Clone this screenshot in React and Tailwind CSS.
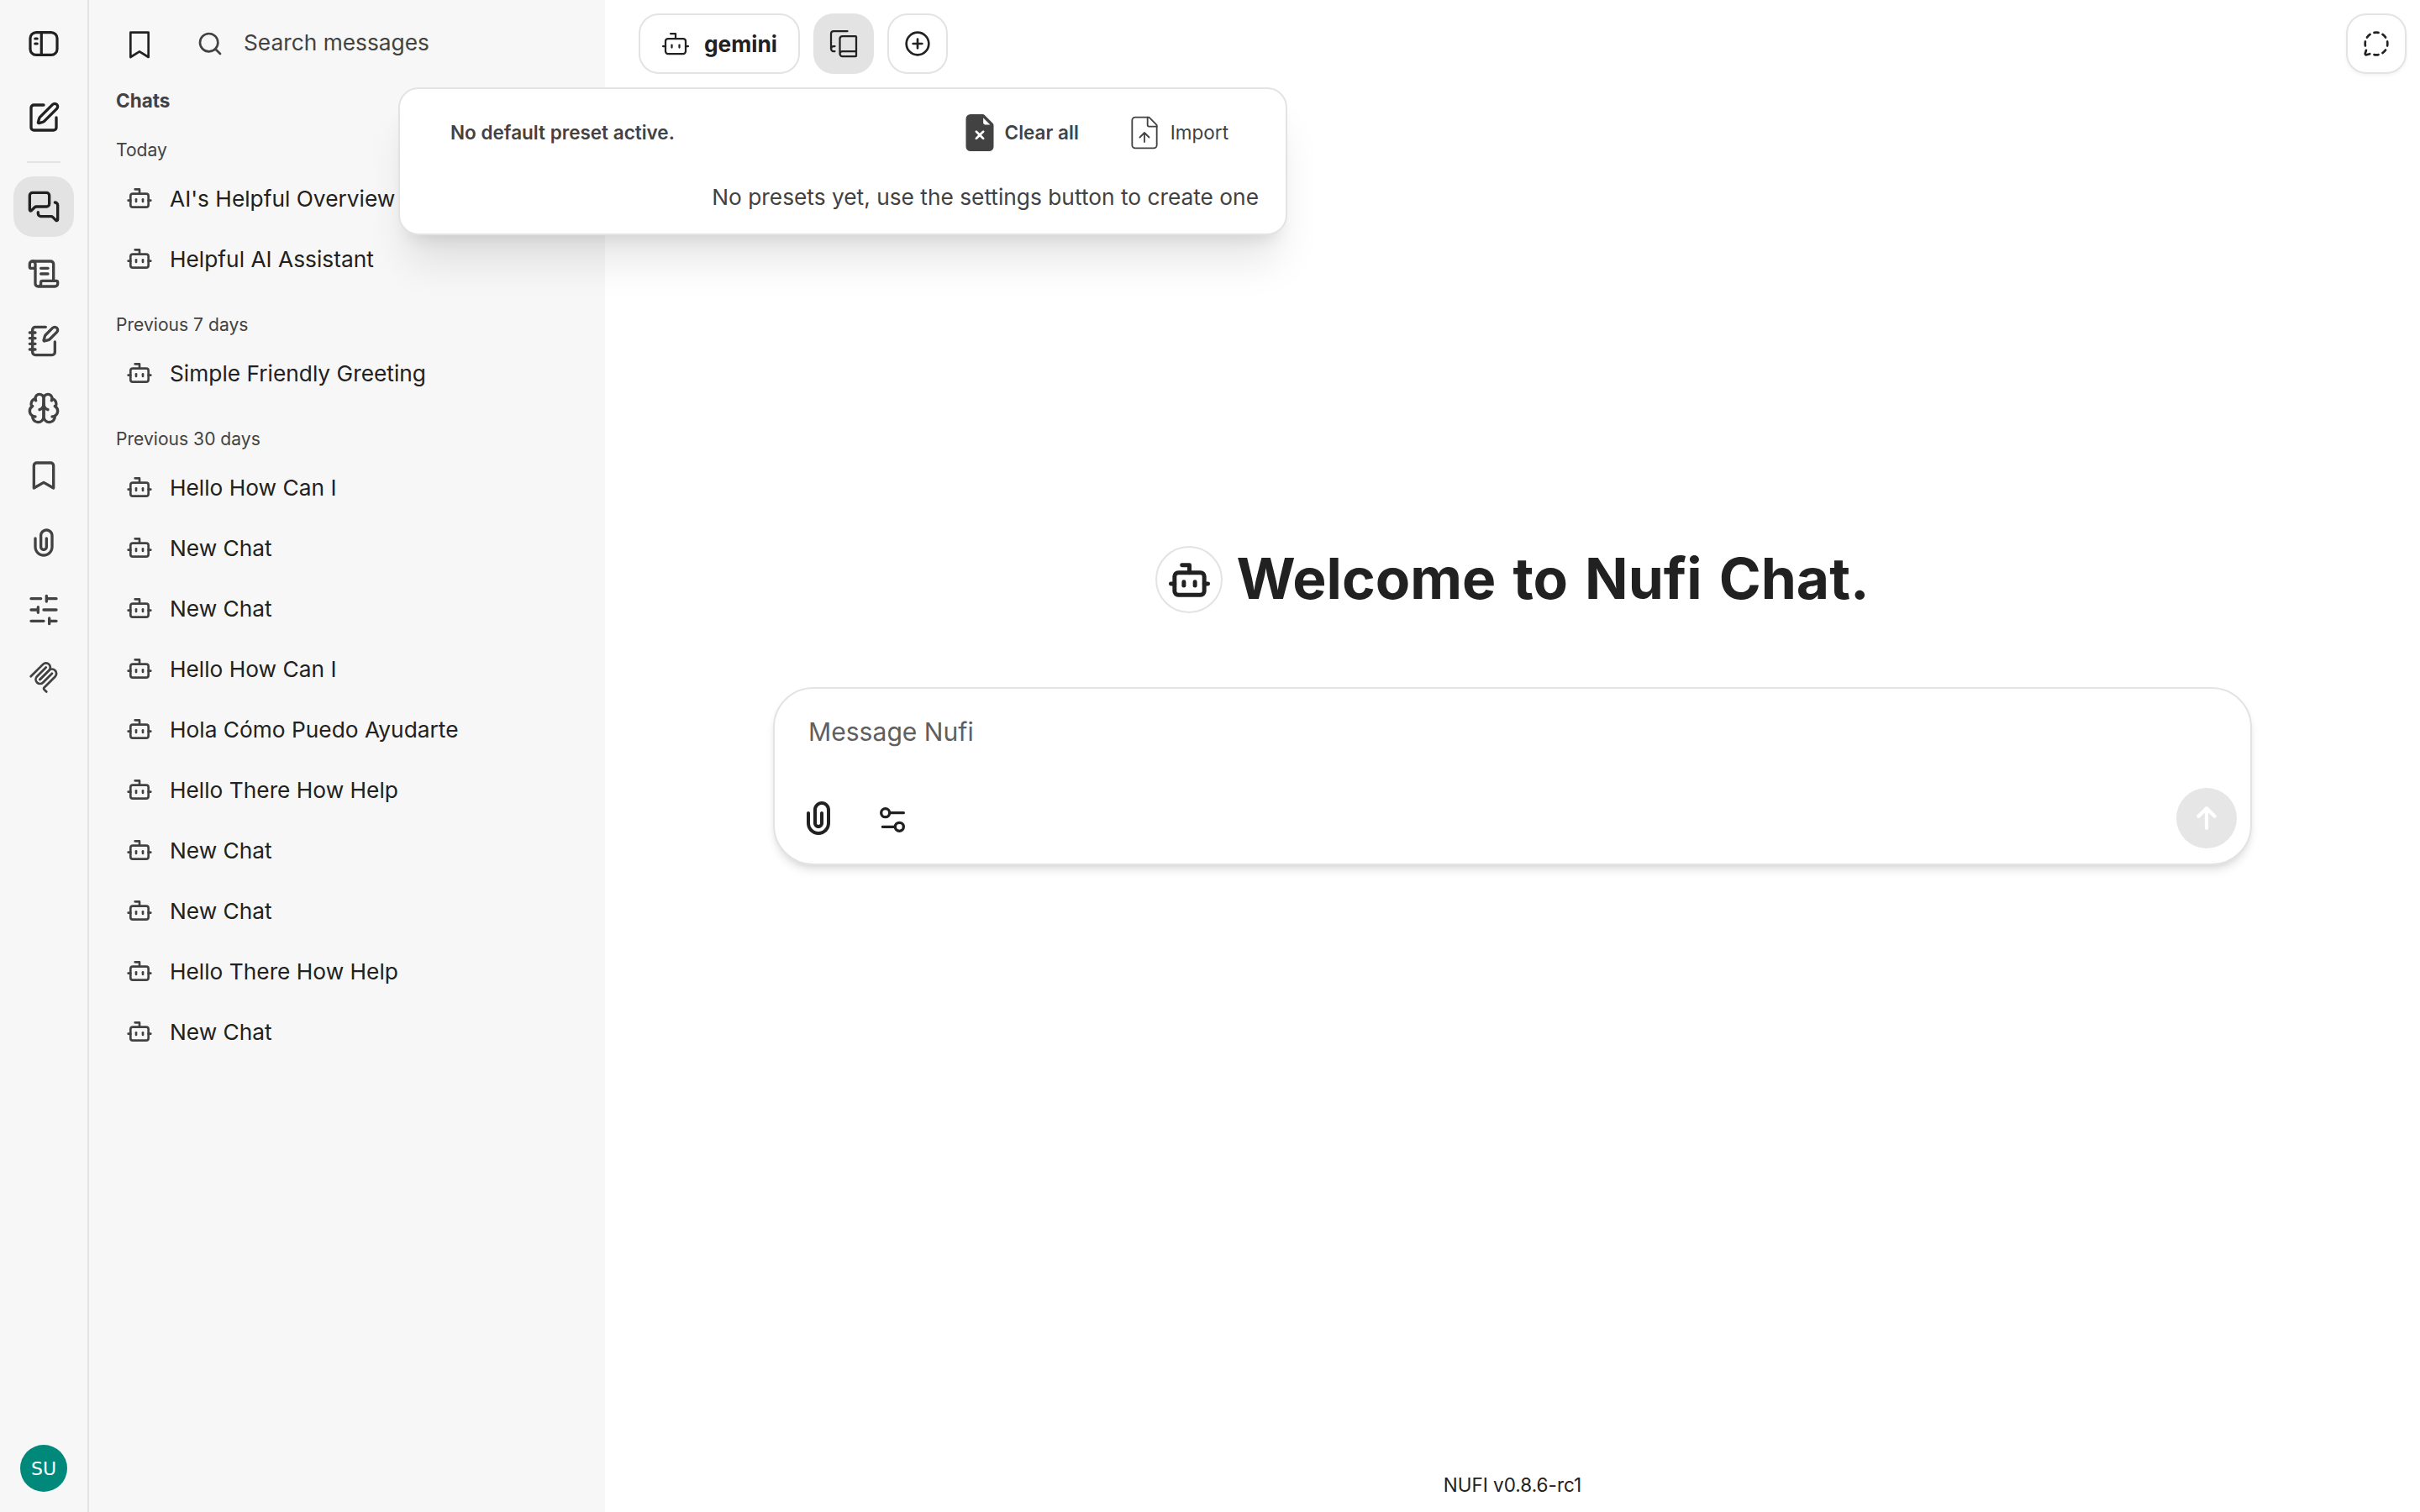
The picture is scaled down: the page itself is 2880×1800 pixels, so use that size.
import React from 'react';
import {
  SquarePen,
  MessagesSquare,
  ScrollText,
  Bookmark,
  Bot,
  Search,
  CirclePlus,
  MessageCircleDashed,
} from 'lucide-react';
import { BsFileEarmarkXFill } from 'react-icons/bs';

const railBtn = 'flex size-[72px] items-center justify-center rounded-3xl';

const groups = [
  { title: 'Today', chats: ["AI's Helpful Overview", 'Helpful AI Assistant'] },
  { title: 'Previous 7 days', chats: ['Simple Friendly Greeting'] },
  {
    title: 'Previous 30 days',
    chats: [
      'Hello How Can I',
      'New Chat',
      'New Chat',
      'Hello How Can I',
      'Hola Cómo Puedo Ayudarte',
      'Hello There How Help',
      'New Chat',
      'New Chat',
      'Hello There How Help',
      'New Chat',
    ],
  },
];

function SidebarIcon() {
  return (
    <svg width="40" height="40" viewBox="0 0 40 40" fill="none" stroke="currentColor" strokeWidth="3.2" strokeLinecap="round">
      <rect x="4" y="6.6" width="32" height="26.8" rx="7" />
      <path d="M17.3 7v26" />
      <path d="M9.8 14h2.4M9.8 20h2.4" />
    </svg>
  );
}

function BookmarkOutline() {
  return (
    <svg width="40" height="40" viewBox="0 0 15 15" fill="none" stroke="currentColor" strokeLinejoin="round">
      <path d="M3.5 2.5h8v11l-4-2.5-4 2.5z" />
    </svg>
  );
}

function NotebookPen() {
  return (
    <svg width="40" height="40" viewBox="0 0 24 24" fill="none" stroke="currentColor" strokeWidth="2" strokeLinecap="round" strokeLinejoin="round">
      <path d="M13.4 2H6a2 2 0 0 0-2 2v16a2 2 0 0 0 2 2h12a2 2 0 0 0 2-2v-7.4" />
      <path d="M2 6h4M2 10h4M2 14h4M2 18h4" />
      <path d="M21.378 5.626a1 1 0 1 0-3.004-3.004l-5.01 5.012a2 2 0 0 0-.506.854l-.837 2.87a.5.5 0 0 0 .62.62l2.87-.837a2 2 0 0 0 .854-.506z" />
    </svg>
  );
}

function BrainIcon() {
  return (
    <svg width="40" height="40" viewBox="0 0 24 24" fill="none" stroke="currentColor" strokeWidth="2" strokeLinecap="round" strokeLinejoin="round">
      <path d="M12 5a3 3 0 1 0-5.997.125 4 4 0 0 0-2.526 5.77 4 4 0 0 0 .556 6.588A4 4 0 1 0 12 18Z" />
      <path d="M12 5a3 3 0 1 1 5.997.125 4 4 0 0 1 2.526 5.77 4 4 0 0 1-.556 6.588A4 4 0 1 1 12 18Z" />
      <path d="M15 13a4.5 4.5 0 0 1-3-4 4.5 4.5 0 0 1-3 4" />
      <path d="M17.599 6.5a3 3 0 0 0 .399-1.375M6.003 5.125A3 3 0 0 0 6.401 6.5M3.477 10.896a4 4 0 0 1 .585-.396M19.938 10.5a4 4 0 0 1 .585.396M6 18a4 4 0 0 1-1.967-.516M19.967 17.484A4 4 0 0 1 18 18" />
    </svg>
  );
}

function AttachmentIcon({ size }) {
  return (
    <svg width={size} height={size} viewBox="0 0 24 24" fill="currentColor">
      <path
        fillRule="evenodd"
        clipRule="evenodd"
        d="M9 7C9 4.23858 11.2386 2 14 2C16.7614 2 19 4.23858 19 7V15C19 18.866 15.866 22 12 22C8.13401 22 5 18.866 5 15V9C5 8.44772 5.44772 8 6 8C6.55228 8 7 8.44772 7 9V15C7 17.7614 9.23858 20 12 20C14.7614 20 17 17.7614 17 15V7C17 5.34315 15.6569 4 14 4C12.3431 4 11 5.34315 11 7V15C11 15.5523 11.4477 16 12 16C12.5523 16 13 15.5523 13 15V9C13 8.44772 13.4477 8 14 8C14.5523 8 15 8.44772 15 9V15C15 16.6569 13.6569 18 12 18C10.3431 18 9 16.6569 9 15V7Z"
      />
    </svg>
  );
}

function SlidersIcon() {
  return (
    <svg width="40" height="40" viewBox="0 0 24 24" fill="none" stroke="currentColor" strokeWidth="2" strokeLinecap="round">
      <path d="M21 4h-7M10 4H3M21 12h-9M8 12H3M21 20h-5M12 20H3M14 2v4M8 10v4M16 18v4" />
    </svg>
  );
}

function McpIcon() {
  return (
    <svg width="40" height="40" viewBox="-4 -6 188 188" fill="none" stroke="currentColor" strokeWidth="13" strokeLinecap="round">
      <path d="M18 84.8528L85.8822 16.9706C95.2548 7.59798 110.451 7.59798 119.823 16.9706C129.196 26.3431 129.196 41.5391 119.823 50.9117L68.5581 102.177" />
      <path d="M69.2652 101.47L119.823 50.9117C129.196 41.5391 144.392 41.5391 153.765 50.9117L154.118 51.2652C163.491 60.6378 163.491 75.8338 154.118 85.2063L92.7248 146.6C89.6006 149.724 89.6006 154.789 92.7248 157.913L105.331 170.52" />
      <path d="M102.853 33.9411L52.6482 84.1457C43.2756 93.5183 43.2756 108.714 52.6482 118.087C62.0208 127.459 77.2167 127.459 86.5893 118.087L136.794 67.8822" />
    </svg>
  );
}

function PresetsIcon() {
  return (
    <svg width="36" height="36" viewBox="0 0 24 24" fill="none" stroke="currentColor" strokeWidth="1.5" strokeLinecap="round" strokeLinejoin="round">
      <path d="M2 16V4a2 2 0 0 1 2-2h11" />
      <path d="M22 18H11a2 2 0 1 0 0 4h10.5a.5.5 0 0 0 .5-.5v-15a.5.5 0 0 0-.5-.5H11a2 2 0 0 0-2 2v12" />
      <path d="M5 14H4a2 2 0 1 0 0 4h1" />
    </svg>
  );
}

function FileUpIcon() {
  return (
    <svg width="44" height="44" viewBox="0 0 24 24" fill="none" stroke="currentColor" strokeWidth="1" strokeLinecap="round" strokeLinejoin="round">
      <path d="M15 2H6a2 2 0 0 0-2 2v16a2 2 0 0 0 2 2h12a2 2 0 0 0 2-2V7Z" />
      <path d="M14 2v5a1 1 0 0 0 1 1h5" />
      <path d="M12 12v6M15 15l-3-3-3 3" />
    </svg>
  );
}

function ToolsIcon() {
  return (
    <svg width="40" height="40" viewBox="0 0 24 24" fill="none" stroke="currentColor" strokeWidth="2" strokeLinecap="round" strokeLinejoin="round">
      <path d="M20 7h-9M14 17H5" />
      <circle cx="17" cy="17" r="3" />
      <circle cx="7" cy="7" r="3" />
    </svg>
  );
}

function SendIcon() {
  return (
    <svg width="60" height="60" viewBox="0 0 32 32" fill="currentColor">
      <path d="M15.1918 8.90615C15.6381 8.45983 16.3618 8.45983 16.8081 8.90615L21.9509 14.049C22.3972 14.4953 22.3972 15.2189 21.9509 15.6652C21.5046 16.1116 20.781 16.1116 20.3347 15.6652L17.1428 12.4734V22.2857C17.1428 22.9169 16.6311 23.4286 15.9999 23.4286C15.3688 23.4286 14.8571 22.9169 14.8571 22.2857V12.4734L11.6652 15.6652C11.2189 16.1116 10.4953 16.1116 10.049 15.6652C9.60265 15.2189 9.60265 14.4953 10.049 14.049L15.1918 8.90615Z" />
    </svg>
  );
}

function Rail() {
  return (
    <aside className="flex w-[106px] shrink-0 flex-col items-center border-r-2 border-[#e3e3e3] pt-4 pb-6 text-[#424242]">
      <button className={`${railBtn} text-[#212121]`}><SidebarIcon /></button>
      <button className={`${railBtn} mt-4 text-[#212121]`}><SquarePen size={40} /></button>
      <div className="my-4 h-0.5 w-10 bg-[#e3e3e3]" />
      <nav className="flex flex-1 flex-col gap-2">
        <button className={`${railBtn} bg-[#e3e3e3] text-[#212121]`}><MessagesSquare size={40} /></button>
        <button className={railBtn}><ScrollText size={40} /></button>
        <button className={railBtn}><NotebookPen /></button>
        <button className={railBtn}><BrainIcon /></button>
        <button className={railBtn}><Bookmark size={40} /></button>
        <button className={railBtn}><AttachmentIcon size={40} /></button>
        <button className={railBtn}><SlidersIcon /></button>
        <button className={railBtn}><McpIcon /></button>
      </nav>
      <div className="flex size-14 items-center justify-center rounded-full bg-[#00897b] font-['DejaVu_Sans',sans-serif] text-[22px] text-white">
        SU
      </div>
    </aside>
  );
}

function ChatPanel() {
  return (
    <section className="flex w-[614px] shrink-0 flex-col pt-4 pl-8 text-[#424242]">
      <div className="flex h-[72px] items-center pl-2">
        <span className="text-[#212121]"><BookmarkOutline /></span>
        <Search size={32} className="ml-12" />
        <span className="ml-6 pb-0.5 text-[26.3px]">Search messages</span>
      </div>
      <h2 className="flex h-[66px] items-center pb-0.5 text-[22.5px] font-bold">Chats</h2>
      {groups.map((group) => (
        <div key={group.title} className="mb-[18px]">
          <h3 className="flex h-[46px] items-center pt-[3px] text-[21.1px]">{group.title}</h3>
          {group.chats.map((chat, i) => (
            <div key={i} className="flex h-[72px] items-center gap-5 pl-3">
              <Bot size={32} />
              <span className="pt-0.5 text-[26.3px] text-[#212121]">{chat}</span>
            </div>
          ))}
        </div>
      ))}
    </section>
  );
}

function PresetsMenu() {
  return (
    <div className="absolute top-[104px] left-[474px] h-44 w-[1058px] rounded-3xl border-2 border-[#e3e3e3] bg-white text-[#424242] shadow-[0_40px_50px_-10px_rgba(0,0,0,0.1),0_16px_20px_-12px_rgba(0,0,0,0.1)]">
      <div className="flex h-[104px] items-center pr-17 pl-15 text-[22.5px]">
        <span className="flex-1 font-semibold">No default preset active.</span>
        <button className="flex items-center gap-2 font-semibold">
          <BsFileEarmarkXFill size={44} />
          Clear all
        </button>
        <button className="ml-14 flex items-center gap-[9px]">
          <FileUpIcon />
          Import
        </button>
      </div>
      <p className="flex h-[50px] items-center justify-end pr-8 text-[26.3px]">No presets yet, use the settings button to create one</p>
    </div>
  );
}

function Header() {
  return (
    <header className="flex h-[104px] items-center gap-4 pr-4 pl-10">
      <button className="flex h-[72px] w-[192px] items-center gap-4 rounded-3xl border-2 border-[#e3e3e3] pl-6 text-[26.3px] font-bold">
        <Bot size={36} strokeWidth={1.5} />
        <span className="pt-0.5">gemini</span>
      </button>
      <button className="flex size-[72px] items-center justify-center rounded-3xl bg-[#e3e3e3]"><PresetsIcon /></button>
      <button className="flex size-[72px] items-center justify-center rounded-3xl border-2 border-[#e3e3e3]"><CirclePlus size={32} /></button>
      <button className="ml-auto flex size-[72px] items-center justify-center rounded-3xl border-2 border-[#e3e3e3] shadow-[0_2px_4px_rgba(0,0,0,0.05)]">
        <MessageCircleDashed size={32} />
      </button>
    </header>
  );
}

function Composer() {
  return (
    <div className="flex h-[212px] w-[1760px] flex-col justify-between rounded-[48px] border-2 border-[#e3e3e3] bg-white p-4 pb-[18px] shadow-[0_8px_12px_-2px_rgba(0,0,0,0.1),0_4px_8px_-4px_rgba(0,0,0,0.1)]">
      <div className="px-6 pt-[13px] text-[30.1px] leading-[44px] text-[#5f5f5f]">Message Nufi</div>
      <div className="flex items-center">
        <button className="flex size-[72px] items-center justify-center"><AttachmentIcon size={48} /></button>
        <button className="ml-4 flex size-[72px] items-center justify-center pt-1"><ToolsIcon /></button>
        <button className="ml-auto flex size-[72px] items-center justify-center rounded-full bg-[#e6e6e6] text-white"><SendIcon /></button>
      </div>
    </div>
  );
}

export default function App() {
  return (
    <div className="relative flex h-screen overflow-hidden bg-[#f7f7f7] font-['Inter',sans-serif] text-[#212121]">
      <Rail />
      <ChatPanel />
      <main className="flex flex-1 flex-col bg-white">
        <Header />
        <div className="flex flex-1 flex-col items-center pt-[546px]">
          <div className="flex h-20 items-center gap-4">
            <div className="flex size-20 items-center justify-center rounded-full border-2 border-[#e3e3e3]">
              <Bot size={53} strokeWidth={2.25} />
            </div>
            <h1 className="pb-0.5 text-[67.7px] leading-none font-bold [word-spacing:4px]">Welcome to Nufi Chat.</h1>
          </div>
          <div className="mt-22">
            <Composer />
          </div>
        </div>
        <footer className="flex h-16 items-center justify-center text-[22.5px]">NUFI v0.8.6-rc1</footer>
      </main>
      <PresetsMenu />
    </div>
  );
}
